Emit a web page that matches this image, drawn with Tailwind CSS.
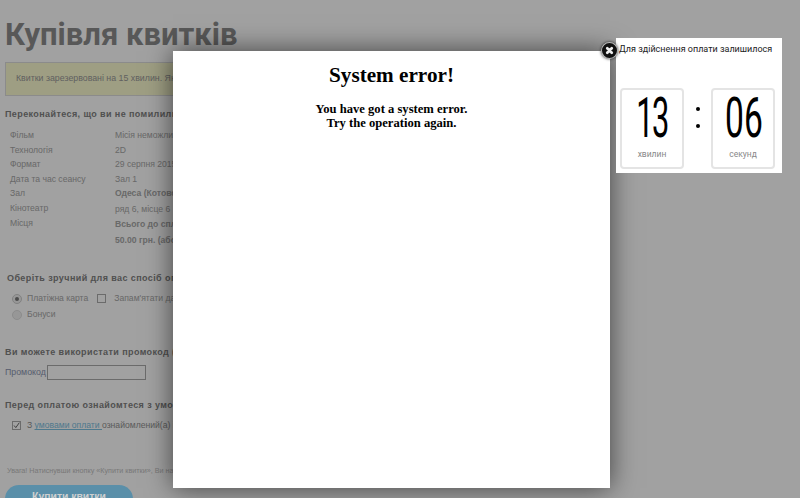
<!DOCTYPE html>
<html>
<head>
<meta charset="utf-8">
<script src="https://cdn.jsdelivr.net/npm/@tailwindcss/browser@4"></script>
</head>
<body class="relative w-[800px] h-[498px] overflow-hidden bg-white font-['Liberation_Sans',Arial,sans-serif]">
<main class="w-[800px] h-[498px] overflow-hidden pl-[5px] text-[#808080]">
  <h1 class="pt-[17px] text-[31px] leading-[36px] font-bold font-['Roboto',sans-serif] text-[#8c8c8c]">Купівля квитків</h1>
  <div class="mt-[9px] w-[600px] h-[34px] border border-[#ddd] bg-[#fbfbd0] pl-[10px] text-[8.8px] leading-[31px] text-[#999]">Квитки зарезервовані на 15 хвилин. Якщо Ви не встигнете</div>
  <h2 class="mt-[11px] text-[9px] leading-[14px] font-bold tracking-[0.4px]">Переконайтеся, що ви не помилилися</h2>
  <div class="mt-[7px] flex pl-[5px] text-[8.6px] leading-[14.6px] text-[#a6a6a6]">
    <div class="w-[105px]">
      <div>Фільм</div><div>Технологія</div><div>Формат</div><div>Дата та час сеансу</div><div>Зал</div><div>Кінотеатр</div><div>Місця</div>
    </div>
    <div>
      <div>Місія неможлива</div><div>2D</div><div>29 серпня 2015</div><div>Зал 1</div><div class="font-bold">Одеса (Котовського)</div>
      <div class="mt-[1.5px]">ряд 6, місце 6</div><div class="font-bold">Всього до сплати</div><div class="mt-[1.5px] font-bold">50.00 грн. (або)</div>
    </div>
  </div>
  <h2 class="mt-[23px] pl-[2px] text-[9px] leading-[14px] font-bold tracking-[0.4px]">Оберіть зручний для вас спосіб оплати</h2>
  <div class="mt-[6px] pl-[7px] flex items-center h-[16px] text-[8.6px] text-[#a6a6a6]">
    <span class="w-[10px] h-[10px] rounded-full border border-[#ccc] bg-[#f0f0f0] flex items-center justify-center"><span class="w-[4px] h-[4px] rounded-full bg-[#777]"></span></span>
    <span class="ml-[5px]">Платіжна карта</span>
    <span class="ml-[9px] w-[9px] h-[9px] border border-[#aaa] bg-white"></span>
    <span class="ml-[8px]">Запам'ятати дані</span>
  </div>
  <div class="mt-[1px] pl-[7px] flex items-center h-[14px] text-[8.6px] text-[#a6a6a6]">
    <span class="w-[10px] h-[10px] rounded-full border border-[#ddd] bg-[#f0f0f0]"></span>
    <span class="ml-[5px]">Бонуси</span>
  </div>
  <h2 class="mt-[23px] text-[9px] leading-[14px] font-bold tracking-[0.4px]">Ви можете використати промокод (в</h2>
  <div class="mt-[6px] flex items-center h-[16px] text-[8.8px] text-[#8a94b0]">
    <span>Промокод</span>
    <span class="ml-[1px] w-[99px] h-[15px] border border-[#aaa] bg-white"></span>
  </div>
  <h2 class="mt-[17px] text-[9px] leading-[14px] font-bold tracking-[0.4px]">Перед оплатою ознайомтеся з умовами</h2>
  <div class="mt-[6px] pl-[7px] flex items-center h-[16px] text-[8.6px] text-[#909090]">
    <span class="w-[9px] h-[9px] border border-[#aaa] bg-white flex items-center justify-center">
      <svg viewBox="0 0 10 10" class="w-[9px] h-[9px]"><path d="M1.5 5 L4 8 L9 1" fill="none" stroke="#555" stroke-width="1.3"/></svg>
    </span>
    <span class="ml-[6px]">З <span class="underline text-[#7cc0e0]">умовами оплати </span>ознайомлений(а) і згоден(на)</span>
  </div>
  <p class="mt-[31px] pl-[2px] text-[7.2px] leading-[12px] text-[#c0c0c0]">Увага! Натиснувши кнопку «Купити квитки», Ви на</p>
  <div class="relative z-10 mt-[8px] w-[128px] h-[30px] rounded-[14px] bg-[#5a8fa9] pt-[5px] text-center text-[10.4px] leading-[14px] font-bold text-[#cfcfcf]">Купити квитки</div>
</main>

<div class="absolute inset-0 bg-black/37"></div>

<section class="absolute left-[173px] top-[51px] w-[437px] h-[437px] bg-white text-black text-center font-['Liberation_Serif',serif] font-bold shadow-[0_0_25px_rgba(0,0,0,0.6)]">
  <h1 class="mt-[12px] text-[21.2px] leading-[25px]">System error!</h1>
  <p class="mt-[14px] text-[12.6px] leading-[14px]">You have got a system error.<br>Try the operation again.</p>
</section>

<aside class="absolute left-[616px] top-[38px] w-[166px] h-[135px] bg-white font-['Roboto',sans-serif]">
  <p class="pl-[3px] pt-[4px] text-[9px] leading-[14px] text-[#222] whitespace-nowrap">Для здійснення оплати залишилося</p>
  <div class="mt-[32px] ml-[4px] flex items-start">
    <div class="w-[64px] h-[81px] rounded-[4px] border-2 border-[#e4e4e4] text-center">
      <div class="h-[56px] text-[56px] leading-[56px] tracking-[-3px] text-black scale-x-[0.55]">13</div>
      <div class="mt-[2px] text-[8.5px] leading-[12px] text-[#888]">хвилин</div>
    </div>
    <div class="w-[27px] mt-[19px] flex flex-col items-center gap-[13px]">
      <span class="w-[4px] h-[4px] rounded-full bg-black"></span>
      <span class="w-[4px] h-[4px] rounded-full bg-black"></span>
    </div>
    <div class="w-[64px] h-[81px] rounded-[4px] border-2 border-[#e4e4e4] text-center">
      <div class="h-[56px] text-[56px] leading-[56px] text-black scale-x-[0.6]">06</div>
      <div class="mt-[2px] text-[8.5px] leading-[12px] text-[#888]">секунд</div>
    </div>
  </div>
</aside>

<button class="absolute left-[601px] top-[42px] w-[17px] h-[17px] rounded-full bg-[#111] border border-white/70 shadow-[0_0_3px_rgba(0,0,0,0.8)] flex items-center justify-center" aria-label="close">
  <svg viewBox="0 0 10 10" class="w-[9px] h-[9px]"><path d="M2.5 2.5 L7.5 7.5 M7.5 2.5 L2.5 7.5" stroke="#eee" stroke-width="3" stroke-linecap="round"/></svg>
</button>
</body>
</html>
